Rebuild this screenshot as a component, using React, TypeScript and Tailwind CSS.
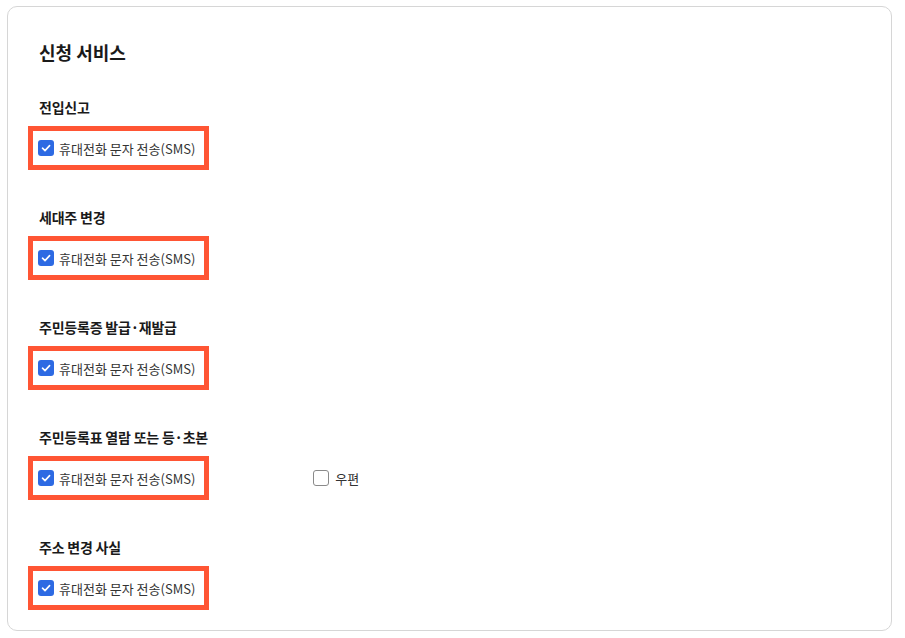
import { FC } from 'react';

interface Service {
  title: string;
  extra?: string;
}

const services: Service[] = [
  { title: '전입신고' },
  { title: '세대주 변경' },
  { title: '주민등록증 발급·재발급' },
  { title: '주민등록표 열람 또는 등·초본', extra: '우편' },
  { title: '주소 변경 사실' },
];

const CheckBox: FC<{ checked: boolean }> = ({ checked }) =>
  checked ? (
    <span className="flex h-4 w-4 shrink-0 items-center justify-center rounded-[3px] bg-[#2d6ae3]">
      <svg width="12" height="12" viewBox="0 0 12 12" fill="none">
        <path d="M2.5 6.2 L5 8.6 L9.6 3.6" stroke="white" strokeWidth="1.6" strokeLinecap="round" strokeLinejoin="round" />
      </svg>
    </span>
  ) : (
    <span className="h-4 w-4 shrink-0 rounded-[3px] border border-[#8a8a8a] bg-white" />
  );

const App: FC = () => {
  return (
    <div
      className="min-h-screen bg-white pl-[7px] pt-[6px]"
      style={{ fontFamily: '"Noto Sans CJK KR", "Noto Sans", sans-serif' }}
    >
      <div className="h-[625px] w-[885px] rounded-[10px] border border-[#d6d6d6] px-[31px] pt-[32px]">
        <h2 className="text-[18px] font-bold leading-[26px] text-[#1a1a1a]">신청 서비스</h2>

        <div className="mt-[32px] flex flex-col gap-[37px]">
          {services.map((s) => (
            <div key={s.title}>
              <p className="text-[14px] font-bold leading-[20px] tracking-[-0.015em] text-[#1a1a1a]">{s.title}</p>
              <div className="mt-[9px] -ml-[11px] flex items-center">
                <label className="flex h-[44px] items-center gap-[5px] border-[5px] border-[#ff5534] pl-[5px] pr-[9px]">
                  <CheckBox checked />
                  <span className="text-[13px] leading-none text-[#333]">휴대전화 문자 전송(SMS)</span>
                </label>
                {s.extra && (
                  <label className="ml-[104px] flex items-center gap-[6px]">
                    <CheckBox checked={false} />
                    <span className="text-[13px] leading-none text-[#333]">{s.extra}</span>
                  </label>
                )}
              </div>
            </div>
          ))}
        </div>
      </div>
    </div>
  );
};

export default App;
